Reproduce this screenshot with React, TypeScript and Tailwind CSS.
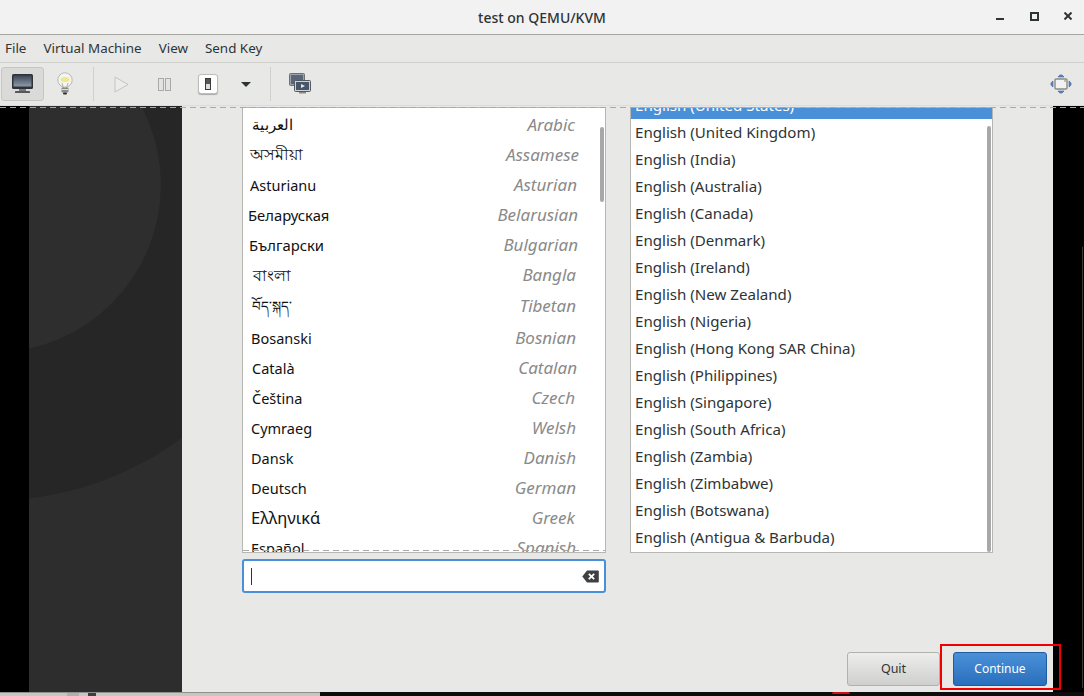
import React from "react";

const menus = ["File", "Virtual Machine", "View", "Send Key"];

const languages = [
  { native: "العربية", english: "Arabic", h: "h-[30px]", pl: "pl-[9px]", pr: "pr-[30px]", size: "text-[15px] -mt-[4px]" },
  { native: "অসমীয়া", english: "Assamese", h: "h-[30px]", pl: "pl-[7px]", pr: "pr-[26px]", size: "text-[16px] -mt-[4px]" },
  { native: "Asturianu", english: "Asturian", h: "h-[30px]", pl: "pl-[7px]", pr: "pr-[28px]", size: "text-[14.5px]" },
  { native: "Беларуская", english: "Belarusian", h: "h-[30px]", pl: "pl-[5px]", pr: "pr-[27px]", size: "text-[14.8px] -mt-[2px]" },
  { native: "Български", english: "Bulgarian", h: "h-[30px]", pl: "pl-[6px]", pr: "pr-[27px]", size: "text-[14.8px] -mt-[2px]" },
  { native: "বাংলা", english: "Bangla", h: "h-[30px]", pl: "pl-[10px]", pr: "pr-[29px]", size: "text-[16px] -mt-[2px]" },
  { native: "བོད་སྐད་", english: "Tibetan", h: "h-[32px]", pl: "pl-[9px]", pr: "pr-[29px]", size: "text-[13.5px] -mt-[2px]" },
  { native: "Bosanski", english: "Bosnian", h: "h-[31px]", pl: "pl-[8px]", pr: "pr-[29px]", size: "text-[14.5px]" },
  { native: "Català", english: "Catalan", h: "h-[30px]", pl: "pl-[9px]", pr: "pr-[28px]", size: "text-[14.5px]" },
  { native: "Čeština", english: "Czech", h: "h-[30px]", pl: "pl-[9px]", pr: "pr-[30px]", size: "text-[14.5px]" },
  { native: "Cymraeg", english: "Welsh", h: "h-[30px]", pl: "pl-[8px]", pr: "pr-[29px]", size: "text-[14.5px]" },
  { native: "Dansk", english: "Danish", h: "h-[30px]", pl: "pl-[8px]", pr: "pr-[29px]", size: "text-[14.5px]" },
  { native: "Deutsch", english: "German", h: "h-[30px]", pl: "pl-[8px]", pr: "pr-[29px]", size: "text-[14.5px]" },
  { native: "Ελληνικά", english: "Greek", h: "h-[30px]", pl: "pl-[8px]", pr: "pr-[30px]", size: "text-[16.5px] -mt-[2px]" },
  { native: "Español", english: "Spanish", h: "h-[30px]", pl: "pl-[8px]", pr: "pr-[29px]", size: "text-[14.5px]" },
];

const locales = [
  "United Kingdom",
  "India",
  "Australia",
  "Canada",
  "Denmark",
  "Ireland",
  "New Zealand",
  "Nigeria",
  "Hong Kong SAR China",
  "Philippines",
  "Singapore",
  "South Africa",
  "Zambia",
  "Zimbabwe",
  "Botswana",
  "Antigua & Barbuda",
];

const dashes =
  "bg-[repeating-linear-gradient(90deg,#a8a8a6_0,#a8a8a6_6px,transparent_6px,transparent_10px)]";

function MonitorIcon() {
  return (
    <svg width="24" height="22" viewBox="0 0 24 22">
      <defs>
        <linearGradient id="scr" x1="0" y1="0" x2="0" y2="1">
          <stop offset="0" stopColor="#3c4656" />
          <stop offset="1" stopColor="#8d99a8" />
        </linearGradient>
      </defs>
      <rect x="1" y="1" width="21" height="15" rx="1.5" fill="#2f3338" />
      <rect x="2.5" y="2.5" width="18" height="11" fill="url(#scr)" />
      <rect x="8" y="16" width="7" height="2" fill="#777" />
      <rect x="4" y="18" width="15" height="2" rx="0.5" fill="#55585c" />
    </svg>
  );
}

function BulbIcon() {
  return (
    <svg width="18" height="24" viewBox="0 0 18 24">
      <circle cx="9" cy="8" r="7.2" fill="#f4f4f0" stroke="#b9b9b4" />
      <ellipse cx="9" cy="7.5" rx="4.5" ry="2.6" fill="#f1e88e" />
      <path d="M6 11 L7.5 16 M12 11 L10.5 16" stroke="#b5b5a8" />
      <rect x="5.5" y="15.5" width="7" height="5" rx="1" fill="#8a8a86" />
      <rect x="5.5" y="17" width="7" height="1" fill="#dddddb" />
      <rect x="7" y="20.5" width="4" height="2" rx="1" fill="#2e2e2e" />
    </svg>
  );
}

function ScreensIcon() {
  return (
    <svg width="22" height="22" viewBox="0 0 22 22">
      <rect x="0.5" y="0.5" width="15" height="12" rx="1" fill="#9aa3ad" stroke="#6d7176" />
      <rect x="2" y="2" width="12" height="9" fill="#5a6675" />
      <rect x="5.5" y="7.5" width="16" height="11" rx="1" fill="#cfd2d4" stroke="#55585c" />
      <rect x="7" y="9" width="13" height="8" fill="#46576c" />
      <path d="M12 11 L16 13 L12 15 Z" fill="#e8e8e7" />
      <rect x="10" y="19" width="7" height="1.5" fill="#8a8a86" />
    </svg>
  );
}

function FullscreenIcon() {
  return (
    <svg width="24" height="22" viewBox="0 0 24 22">
      <path d="M9 4 Q12 -0.5 15 4 Z M9 18 Q12 22.5 15 18 Z" fill="#5f86bf" stroke="#3f659f" strokeWidth="0.6" />
      <path d="M4 8 Q-0.5 11 4 14 Z M20 8 Q24.5 11 20 14 Z" fill="#5f86bf" stroke="#3f659f" strokeWidth="0.6" />
      <rect x="6" y="6" width="12" height="10" rx="1" fill="#f2f2f0" stroke="#8b8b85" strokeWidth="1.4" />
      <rect x="15" y="7" width="2" height="2" fill="#bcbcb8" />
    </svg>
  );
}

function ClearIcon() {
  return (
    <svg width="17" height="13" viewBox="0 0 17 13">
      <path
        fillRule="evenodd"
        d="M5 0.5 H16 a0.8 0.8 0 0 1 0.8 0.8 V11.7 a0.8 0.8 0 0 1 -0.8 0.8 H5 L0.3 6.5 Z M7.5 3.2 L6.2 4.5 L8.2 6.5 L6.2 8.5 L7.5 9.8 L9.5 7.8 L11.5 9.8 L12.8 8.5 L10.8 6.5 L12.8 4.5 L11.5 3.2 L9.5 5.2 Z"
        fill="#3d4144"
      />
    </svg>
  );
}

function Toolbar() {
  return (
    <div className="flex h-[43px] items-center border-b border-[#dcdcda] bg-[#e8e8e7] pl-[1px] pr-[11px]">
      <div className="flex h-[34px] w-[43px] items-center justify-center rounded-[3px] border border-[#c6c6c3] bg-[#dadad8]">
        <MonitorIcon />
      </div>
      <div className="flex w-[41px] justify-center">
        <BulbIcon />
      </div>
      <div className="ml-[8px] h-[34px] w-px bg-[#d0d0cd]" />
      <div className="flex w-[54px] justify-center">
        <svg width="15" height="17" viewBox="0 0 15 17">
          <path d="M1 1 L14 8.5 L1 16 Z" fill="#ecece9" stroke="#c4c4c0" />
        </svg>
      </div>
      <div className="flex w-[33px] justify-center">
        <svg width="13" height="13" viewBox="0 0 13 13">
          <rect x="0.5" y="0.5" width="5" height="12" fill="#e4e4e2" stroke="#a9a9a6" />
          <rect x="7.5" y="0.5" width="5" height="12" fill="#e4e4e2" stroke="#a9a9a6" />
        </svg>
      </div>
      <div className="ml-[17px] flex h-[20px] w-[20px] items-center justify-center rounded-[3px] border border-[#bdbdb9] bg-white shadow-[0_1px_1px_#aaa]">
        <div className="h-[12px] w-[6px] border border-[#3a3a3a] bg-[linear-gradient(#555_0,#555_50%,#ddd_50%)]" />
      </div>
      <div className="ml-[23px] h-0 w-0 border-x-[5px] border-t-[5px] border-x-transparent border-t-[#2e3436]" />
      <div className="ml-[19px] h-[34px] w-px bg-[#d0d0cd]" />
      <div className="ml-[18px]">
        <ScreensIcon />
      </div>
      <div className="ml-auto">
        <FullscreenIcon />
      </div>
    </div>
  );
}

function LanguageList() {
  return (
    <div className="relative h-[446px] overflow-hidden border border-[#b6b6b2] bg-white">
      <div className="pt-[3px]">
        {languages.map((l) => (
          <div key={l.english} className={`flex items-center justify-between ${l.h} ${l.pl} ${l.pr}`}>
            <span className={`${l.size} text-[#111]`}>{l.native}</span>
            <span className="-mt-[2px] text-[17px] italic text-[#8a8a8a]">{l.english}</span>
          </div>
        ))}
      </div>
      <div className="absolute right-[1px] top-[19px] h-[75px] w-[4px] rounded-full bg-[#a8a8a8]" />
      <div className={`absolute inset-x-0 bottom-[1px] h-px ${dashes}`} />
    </div>
  );
}

function LocaleList() {
  return (
    <div className="relative h-[446px] overflow-hidden border border-[#b6b6b2] bg-white">
      <div className="-mt-[16px] flex h-[27px] items-center bg-[#4a90d9] pl-[4px] text-[15.1px] text-white">
        English (United States)
      </div>
      {locales.map((name) => (
        <div key={name} className="flex h-[27px] items-center pl-[4px] text-[15.1px] text-[#2e3436]">
          English ({name})
        </div>
      ))}
      <div className="absolute right-[1px] top-[18px] h-[426px] w-[4px] rounded-full bg-[#a8a8a8]" />
    </div>
  );
}

export default function App() {
  return (
    <div className="relative flex h-[696px] w-[1084px] flex-col overflow-hidden bg-black font-['Noto_Sans',sans-serif]">
      {/* Title bar */}
      <div className="relative flex h-[35px] shrink-0 items-center justify-center border-b border-[#a6a6a1] bg-[#f2f2f2]">
        <span className="text-[14px] font-medium text-[#2e3436]">test on QEMU/KVM</span>
        <div className="absolute right-[12px] top-[12px] flex items-start gap-[25px]">
          <div className="mr-[1px] mt-[6px] h-[2px] w-[8px] bg-[#2e3436]" />
          <div className="h-[9px] w-[9px] border-2 border-[#2e3436]" />
          <svg width="8" height="8" viewBox="0 0 8 8">
            <path d="M0.5 0.5 L7.5 7.5 M7.5 0.5 L0.5 7.5" stroke="#2e3436" strokeWidth="2" />
          </svg>
        </div>
      </div>

      {/* Menu bar */}
      <div className="flex h-[28px] shrink-0 items-center gap-[17px] border-b border-[#cfcfcc] bg-[#e8e8e7] pl-[5px] text-[13.4px] text-[#2e3436]">
        {menus.map((m) => (
          <span key={m}>{m}</span>
        ))}
      </div>

      <Toolbar />

      {/* Guest display */}
      <div className="relative flex min-h-0 flex-1">
        <div className="w-[29px] shrink-0 bg-black" />

        <div className="relative w-[153px] shrink-0 overflow-hidden bg-[#2d2d2d]">
          <svg className="absolute inset-0 h-full w-full" viewBox="0 0 153 587">
            <circle cx="-36" cy="79" r="316" fill="#262626" />
            <circle cx="-36" cy="79" r="168" fill="#2e2e2e" />
          </svg>
        </div>

        <div className="flex min-w-0 flex-1 flex-col bg-[#e8e8e7] pb-[6px] pl-[60px] pr-[6px] pt-[1px]">
          <div className="flex gap-[24px]">
            <div className="w-[364px]">
              <LanguageList />
              <div className="mt-[6px] flex h-[34px] items-center justify-between rounded-[3px] border-2 border-[#4a90d9] bg-white pl-[7px] pr-[5px]">
                <div className="h-[17px] w-px bg-[#2e3436]" />
                <ClearIcon />
              </div>
            </div>
            <div className="w-[363px]">
              <LocaleList />
            </div>
          </div>

          <div className="mt-auto flex justify-end gap-[13px]">
            <button className="h-[34px] w-[93px] rounded-[3px] border border-[#b1b1ad] bg-gradient-to-b from-[#ededec] to-[#cfcfcd] text-[12.5px] text-[#2e3436]">
              Quit
            </button>
            <button className="h-[34px] w-[94px] rounded-[3px] border border-[#1f5c9f] bg-gradient-to-b from-[#4a90d9] to-[#2a6fbb] text-[12px] text-white">
              Continue
            </button>
          </div>
        </div>

        <div className="w-[31px] shrink-0 bg-black" />

        {/* Overlays on the guest display */}
        <div className={`absolute inset-x-0 top-[1px] h-px ${dashes}`} />
        <div className="absolute bottom-[4px] right-[1px] top-[141px] w-px bg-[#3a3a3a]" />
        <div className="absolute bottom-[2px] left-[940px] h-[46px] w-[121px] border-2 border-[#f00000]" />
      </div>

      {/* Strip of the host desktop under the window */}
      <div className="flex h-[4px] shrink-0 items-start">
        <div className="relative h-full w-[320px] border-t border-[#8f8f8c] bg-[#c6c6c4]">
          <div className="absolute left-[67px] h-full w-[12px] bg-[#b0b0ae]" />
          <div className="absolute left-[88px] h-full w-[8px] bg-[#3d3d48]" />
        </div>
        <div className="relative h-full flex-1 bg-[#0d0d0d]">
          <div className="absolute left-[512px] h-[2px] w-[18px] rounded-t-full bg-[#d01010]" />
        </div>
      </div>
    </div>
  );
}
